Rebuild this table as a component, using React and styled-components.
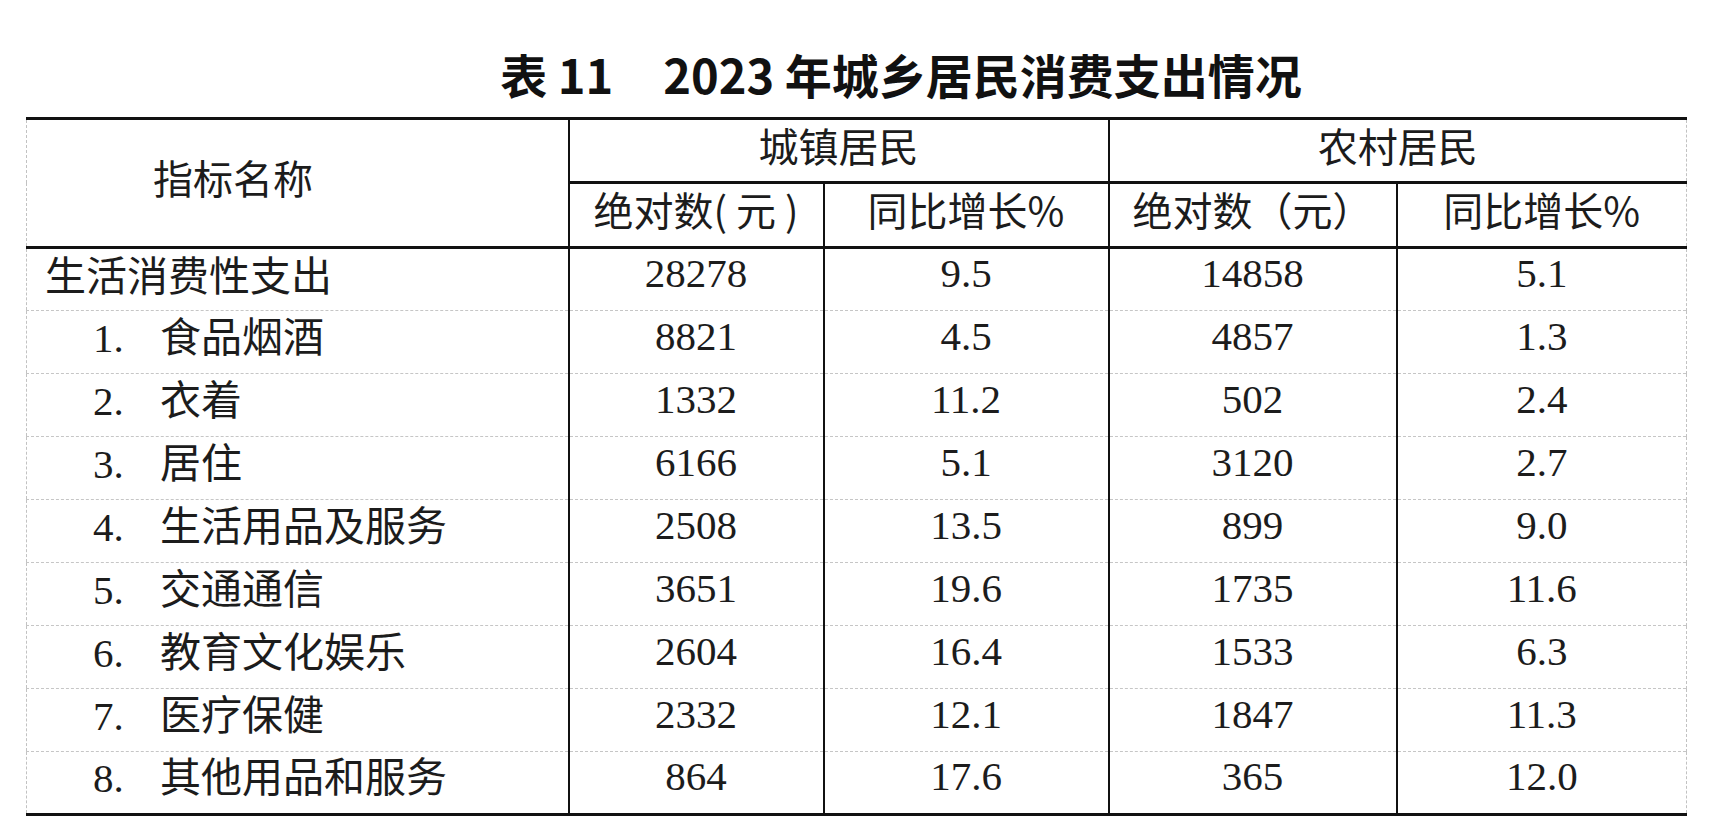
import React from 'react';
import styled, { createGlobalStyle } from 'styled-components';

const GlobalStyle = createGlobalStyle`
  html, body {
    margin: 0;
    padding: 0;
    background: #fff;
  }
  body {
    font-family: 'Noto Sans CJK SC', 'Liberation Serif', serif;
    color: #1c1c1c;
  }
`;

const Page = styled.div`
  width: 1725px;
  height: 840px;
  padding-left: 26px;
  box-sizing: border-box;
`;

const Title = styled.h1`
  margin: 0;
  height: 117px;
  box-sizing: border-box;
  padding: 50px 0 0 90px;
  width: 1660px;
  text-align: center;
  font-family: 'Noto Sans CJK SC', sans-serif;
  font-size: 47px;
  font-weight: 700;
  line-height: 1;
  color: #111;

  span {
    margin-right: 50px;
  }
`;

const Table = styled.table`
  width: 1660px;
  border-collapse: collapse;
  table-layout: fixed;
  border-top: 3px solid #111;
  border-bottom: 3px solid #111;
  border-left: 1.5px dashed #c2c2c2;
  border-right: 1.5px dashed #c2c2c2;
`;

const HeadRow = styled.tr`
  height: ${({ h }) => h}px;
`;

const HeadCell = styled.th`
  padding: 0 0 12px;
  font-weight: 400;
  font-size: 40px;
  line-height: 1;
  text-align: ${({ align }) => align || 'center'};
  padding-left: ${({ indent }) => indent || 0}px;
  border-right: 2px solid #111;
  border-bottom: 3px solid #111;
  white-space: nowrap;

  &:last-child {
    border-right: 1.5px dashed #c2c2c2;
  }
`;

const Row = styled.tr`
  height: 63px;

  & + & td {
    border-top: 1.5px dashed #c6c6c6;
  }
`;

const LabelCell = styled.td`
  padding: 0 0 12px ${({ sub }) => (sub ? 66 : 18)}px;
  font-size: 41px;
  line-height: 1;
  border-right: 2px solid #111;
  white-space: nowrap;
`;

const Num = styled.span`
  display: inline-block;
  width: 67px;
  font-family: 'Liberation Serif', serif;
  font-size: 41px;
`;

const ValueCell = styled.td`
  padding: 0 0 12px;
  text-align: center;
  font-family: 'Liberation Serif', serif;
  font-size: 41px;
  line-height: 1;
  border-right: 2px solid #111;

  &:last-child {
    border-right: 1.5px dashed #c2c2c2;
  }
`;

const rows = [
  { label: '生活消费性支出', values: ['28278', '9.5', '14858', '5.1'] },
  { no: '1.', label: '食品烟酒', values: ['8821', '4.5', '4857', '1.3'] },
  { no: '2.', label: '衣着', values: ['1332', '11.2', '502', '2.4'] },
  { no: '3.', label: '居住', values: ['6166', '5.1', '3120', '2.7'] },
  { no: '4.', label: '生活用品及服务', values: ['2508', '13.5', '899', '9.0'] },
  { no: '5.', label: '交通通信', values: ['3651', '19.6', '1735', '11.6'] },
  { no: '6.', label: '教育文化娱乐', values: ['2604', '16.4', '1533', '6.3'] },
  { no: '7.', label: '医疗保健', values: ['2332', '12.1', '1847', '11.3'] },
  { no: '8.', label: '其他用品和服务', values: ['864', '17.6', '365', '12.0'] },
];

const App = () => {
  return (
    <Page>
      <GlobalStyle />
      <Title>
        <span>表 11</span>2023 年城乡居民消费支出情况
      </Title>
      <Table>
        <colgroup>
          <col style={{ width: 542 }} />
          <col style={{ width: 255 }} />
          <col style={{ width: 285 }} />
          <col style={{ width: 288 }} />
          <col style={{ width: 290 }} />
        </colgroup>
        <thead>
          <HeadRow h={64}>
            <HeadCell rowSpan={2} align="left" indent={126}>
              指标名称
            </HeadCell>
            <HeadCell colSpan={2}>城镇居民</HeadCell>
            <HeadCell colSpan={2}>农村居民</HeadCell>
          </HeadRow>
          <HeadRow h={65}>
            <HeadCell>绝对数( 元 )</HeadCell>
            <HeadCell>同比增长%</HeadCell>
            <HeadCell>绝对数（元）</HeadCell>
            <HeadCell>同比增长%</HeadCell>
          </HeadRow>
        </thead>
        <tbody>
          {rows.map(({ no, label, values }) => (
            <Row key={label}>
              <LabelCell sub={!!no}>
                {no && <Num>{no}</Num>}
                {label}
              </LabelCell>
              {values.map((v, i) => (
                <ValueCell key={i}>{v}</ValueCell>
              ))}
            </Row>
          ))}
        </tbody>
      </Table>
    </Page>
  );
};

export default App;
